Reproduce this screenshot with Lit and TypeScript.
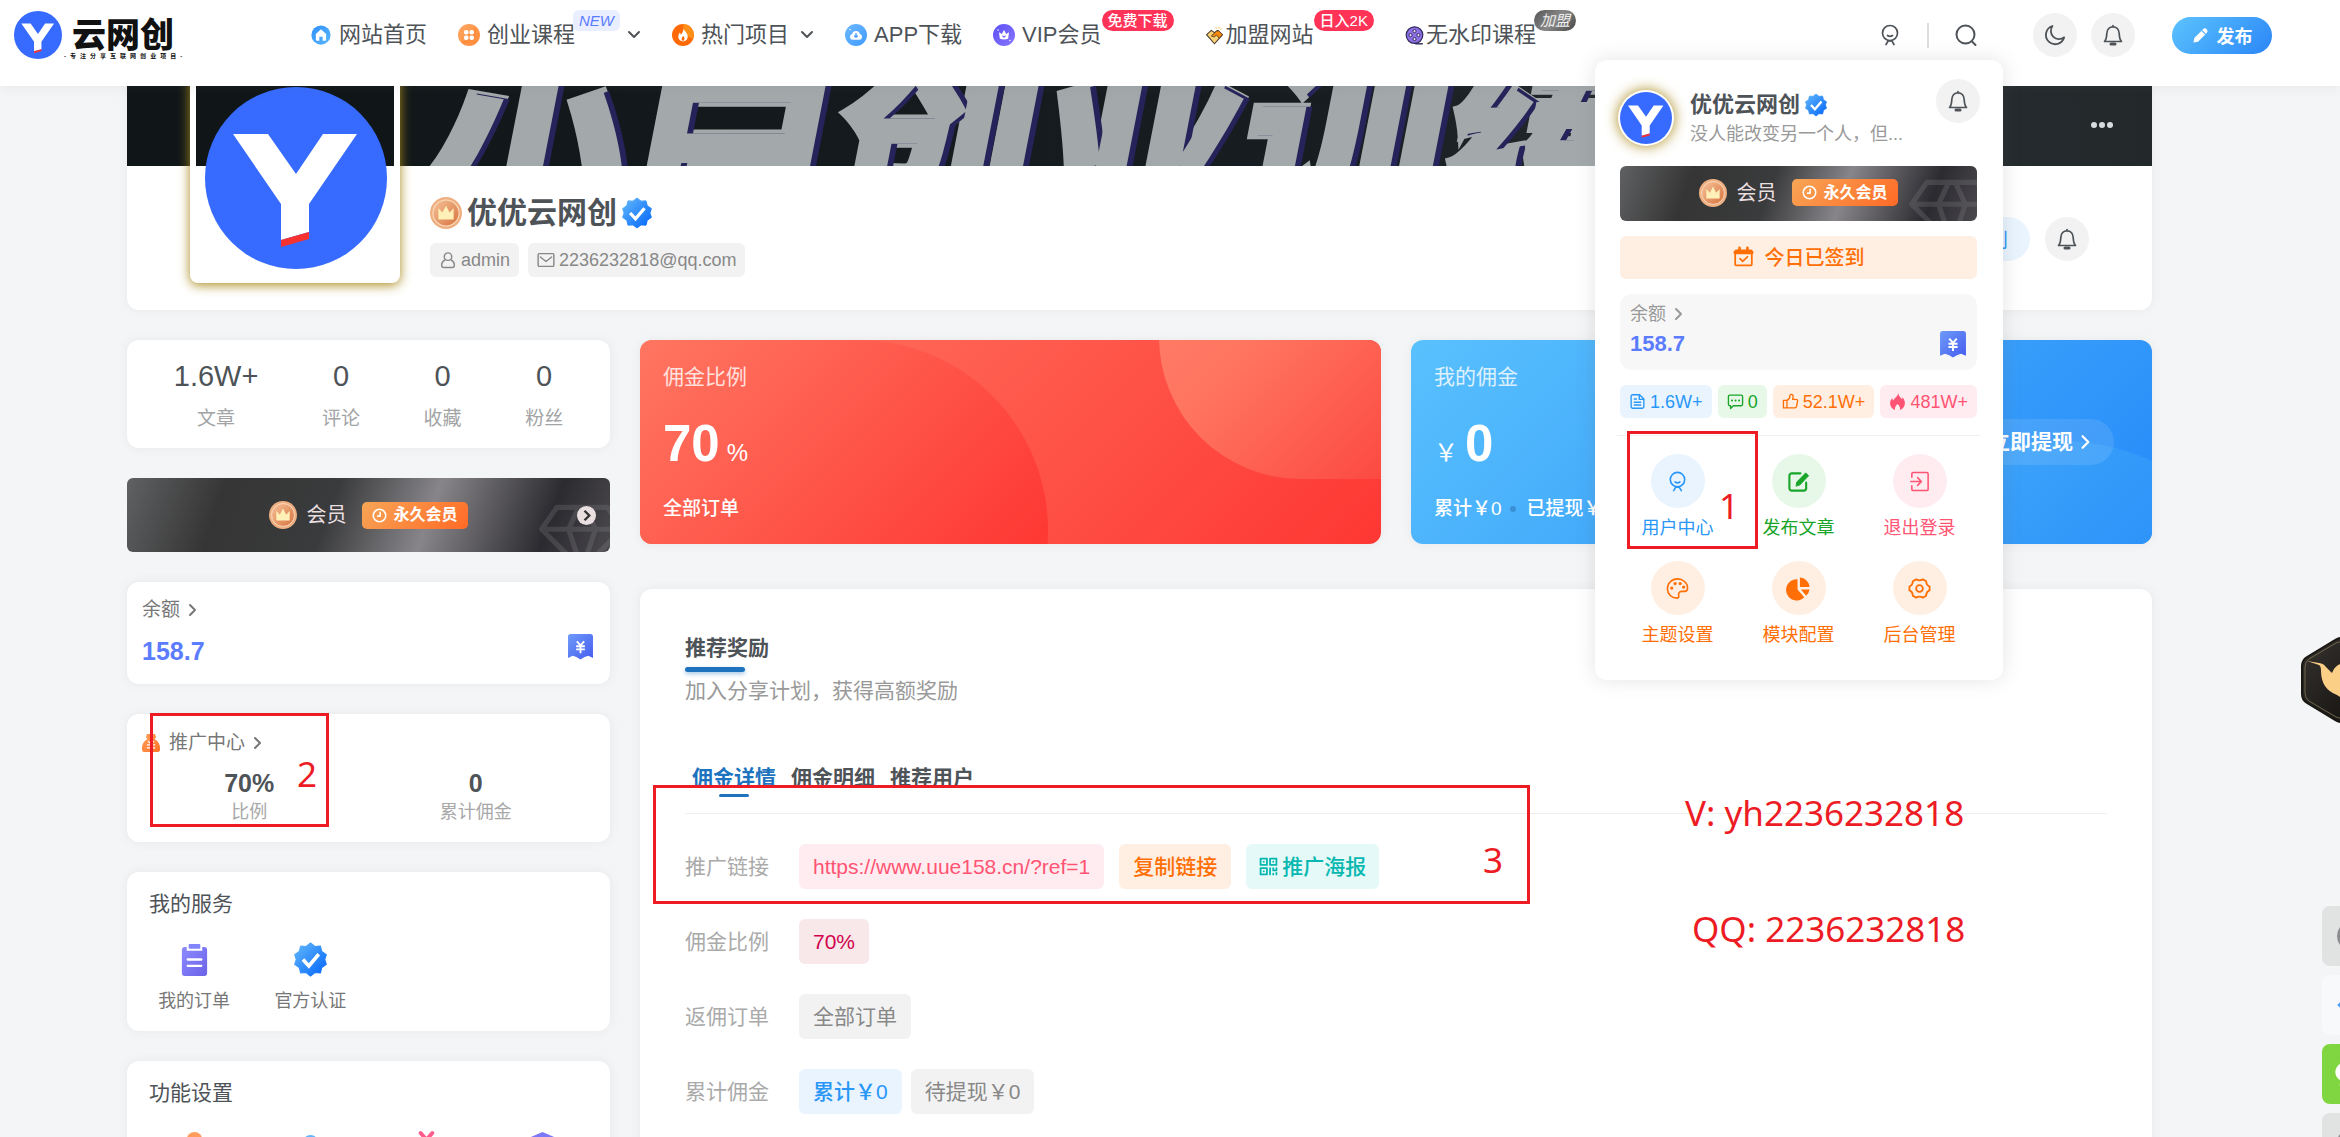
import { LitElement, html, css, svg, TemplateResult } from "lit";
import { customElement, property } from "lit/decorators.js";

type Icon = TemplateResult;

const line = (body: unknown, box = 24, width = 2): Icon => html`<svg viewBox="0 0 ${box} ${box}" fill="none" stroke="currentColor" stroke-width="${width}" stroke-linecap="round" stroke-linejoin="round" aria-hidden="true">${body}</svg>`;
const art = (body: unknown, box = "0 0 24 24"): Icon => html`<svg viewBox="${box}" aria-hidden="true">${body}</svg>`;

const grad = (id: string, from: string, to: string) => svg`<defs><linearGradient id="${id}" x1="0" y1="0" x2="1" y2="1"><stop offset="0" stop-color="${from}"/><stop offset="1" stop-color="${to}"/></linearGradient></defs>`;

const icons = {
  brand: () => art(svg`<circle r="91" fill="#376bff"/><path d="M-63-44H-28L0-4 27-44H61L13 26V54L-15 62V26Z" fill="#fff"/><path d="M-15 62 13 54V61L-15 69Z" fill="#f5322f"/>`, "-91 -91 182 182"),
  home: () => art(svg`${grad("hm", "#2e8ff8", "#5cb8ff")}<circle cx="12" cy="12" r="10.5" fill="url(#hm)"/><path d="M12 5.6 6.4 10.8V17a1.3 1.3 0 0 0 1.3 1.3h2.5v-4.4h3.6v4.4h2.5a1.3 1.3 0 0 0 1.3-1.3v-6.200Z" fill="#fff"/>`),
  course: () => art(svg`${grad("cs", "#ffa765", "#ff8a38")}<circle cx="12" cy="12" r="12" fill="url(#cs)"/><path d="M18 2A12 12 0 0 1 3 20Q16 16 18 2Z" fill="#ff7d2b" opacity=".35"/><g fill="#fff"><rect x="6.500" y="6.500" width="5" height="5" rx="2.200"/><rect x="12.500" y="6.500" width="5" height="5" rx="2.200"/><rect x="6.500" y="12.500" width="5" height="5" rx="2.200"/><rect x="12.500" y="12.500" width="5" height="5" rx="2.200"/></g>`),
  hot: () => art(svg`<circle cx="12" cy="12" r="12" fill="#ff6a06"/><path d="M12 0a12 12 0 0 1 11 16Q13 14 12 0Z" fill="#ffa01e" opacity=".7"/><path d="M12.500 4.500c.6 3 4.700 5 4.700 9.200a5.200 5.200 0 0 1-10.400.2c0-2 1-3.200 1.700-4.600.6.900.9 1.600 1 2.300 2-1.800 3-4.500 3-7.100Z" fill="#fff"/><path d="M12 18.800c-2.500-1.800-1.500-4 .3-5.600 1.600 1.800 2.200 3.800-.3 5.600Z" fill="#ff6a06"/>`),
  app: () => art(svg`${grad("ap", "#6cb8ff", "#3f9bff")}<circle cx="12" cy="12" r="12" fill="url(#ap)"/><path d="M8.500 17.300a3.200 3.200 0 0 1-.7-6.300 4.300 4.300 0 0 1 8.400 0 3.200 3.200 0 0 1-.7 6.300Z" fill="#fff"/><path d="M12 9.800v4.800m-2-2 2 2 2-2" stroke="#4ba2ff" stroke-width="1.500" fill="none"/><circle cx="5.500" cy="6" r=".8" fill="#fff"/>`),
  vip: () => art(svg`${grad("vp", "#5a50f5", "#8a77ff")}<circle cx="12" cy="12" r="12" fill="url(#vp)"/><path d="M6.500 9 9.600 10.800 12 6.500l2.400 4.300L17.500 9l-1 7.200q-4.500 1.500-9 0Z" fill="#fff"/><path d="m10.300 12.800 1.700 1.700 1.700-1.700" stroke="#6e60f9" stroke-width="1.200" fill="none"/><circle cx="5.500" cy="6.500" r=".8" fill="#fff"/><circle cx="18.500" cy="18" r=".8" fill="#fff"/>`),
  join: () => art(svg`<path d="M2 11 8 5.500l4 3 4-3L22 11 12 22.500Z" fill="#fbd277" stroke="#4a3a2a" stroke-width="1.300"/><path d="M8 12.500 14.500 6.500l3-.5L22 11l-4 4.500-3.500-4-3 2.500Z" fill="#f58a0b" stroke="#4a3a2a" stroke-width="1.100"/><path d="M14 1.500v2M18 1l-.5 2.500M21 3.500l-2 1.500" stroke="#f9b94b" stroke-width="1.200"/>`),
  reel: () => art(svg`<circle cx="12" cy="11.500" r="10.500" fill="#8f6fe8" stroke="#2d2a55" stroke-width="1.500"/><path d="M13 22.500h9.500" stroke="#2d2a55" stroke-width="1.800"/><g fill="#e7defc" stroke="#2d2a55" stroke-width="1.200"><circle cx="12" cy="6.500" r="2"/><circle cx="12" cy="16.500" r="2"/><circle cx="7" cy="11.500" r="2"/><circle cx="17" cy="11.500" r="2"/></g>`),
  chevronDown: () => line(svg`<path d="m2 4 5 5 5-5"/>`, 14, 2),
  chevronRight: () => line(svg`<path d="m4 2 5 5-5 5"/>`, 14, 2),
  person: () => line(svg`<circle cx="12" cy="10" r="7.500"/><path d="M9.500 12.500q2.500 1.800 5 0M8 21.500l2.200-3.600h3.600l2.200 3.600"/>`, 24, 1.700),
  search: () => line(svg`<circle cx="11.500" cy="11.500" r="9"/><path d="m18.500 19 3 3"/>`, 24, 2),
  moon: () => line(svg`<path d="M9.500 3a9.300 9.300 0 1 0 11.700 11.300A8.200 8.200 0 0 1 9.500 3Z"/>`, 24, 1.800),
  bell: () => line(svg`<path d="M12 2.500v1.200M3.500 18.500h17c-2-2-2-4-2.300-8C18 6.500 15.500 3.800 12 3.800S6 6.500 5.800 10.500c-.3 4-.3 6-2.300 8Z"/><path d="M10 21h4" stroke-width="3"/>`, 24, 1.700),
  pencil: () => art(svg`<path d="M2 22l1.300-6.500L15.600 3.200a3.600 3.600 0 0 1 5.200 5.200L8.500 20.700Z" fill="currentColor"/><path d="m14 5 5 5" stroke="#44a5fa" stroke-width="1.500"/>`),
  verified: () => art(svg`${grad("vf", "#63b9fb", "#0264fb")}<path d="M12 0l3.200 2.500 4-.2 1 3.900L23.500 8.500 22.300 12l1.200 3.500-3.300 2.300-1 3.900-4-.2L12 24l-3.200-2.500-4 .2-1-3.900L.5 15.500 1.700 12 .5 8.500l3.300-2.300 1-3.900 4 .2Z" fill="url(#vf)" stroke="url(#vf)" stroke-width=".8" stroke-linejoin="round"/><path d="m6.500 12 4.300 4.700L18 8.200" fill="none" stroke="#fff" stroke-width="2.600"/>`),
  medal: () => art(svg`${grad("md", "#f6c49a", "#d8713e")}<circle cx="12" cy="12" r="12" fill="#eeb082"/><circle cx="12" cy="12" r="9.800" fill="url(#md)" stroke="#fbdcbd" stroke-width=".8"/><path d="m6.300 8.500 3 3.200L12 6.500l2.700 5.200 3-3.200v8.300H6.300Z" fill="#fff0b8"/>`),
  user: () => line(svg`<circle cx="12" cy="7.500" r="5"/><path d="M8 12c-3 1.500-4.500 4-4.500 7 0 2 1 3 3 3h11c2 0 3-1 3-3 0-3-1.500-5.500-4.500-7"/>`, 24, 1.900),
  mail: () => line(svg`<rect x="1.500" y="3.500" width="21" height="17" rx="1.500"/><path d="m4.500 8 7.500 6 7.500-6"/>`, 24, 1.900),
  clock: () => line(svg`<circle cx="12" cy="12" r="10"/><path d="M13 7v6H9"/>`, 24, 2.500),
  arrowDisc: () => art(svg`<circle cx="12" cy="12" r="12" fill="#eadfe0"/><path d="m9.500 6 6 6-6 6" fill="none" stroke="#333" stroke-width="3"/>`),
  diamond: () => line(svg`<path d="M20 4h60l18 26-48 48L2 30ZM2 30h96M34 30 50 78 66 30M34 30 46 4M66 30 54 4"/>`, 100, 6),
  calendar: () => line(svg`<rect x="2.500" y="5" width="19" height="17" rx="1"/><path d="M2.500 7.500h19" stroke-width="4"/><path d="M7.500 2v3M16.500 2v3" stroke-width="3"/><path d="m8 14.500 3 3 5.500-5"/>`, 24, 2),
  coupon: () => art(svg`${grad("cp", "#6e9bf8", "#465cf0")}<path d="M2.500 0h19A2.500 2.500 0 0 1 24 2.500V23l-4.500-2-3.500 1.200L12 24.500l-4-2.300L4.500 21 0 23V2.500A2.500 2.500 0 0 1 2.500 0Z" fill="url(#cp)"/><path d="m8.500 7 3.500 4 3.500-4M12 11v7.500M7.800 11.800h8.400M7.800 14.800h8.400" fill="none" stroke="#fff" stroke-width="1.800"/>`, "0 0 24 25"),
  doc: () => line(svg`<path d="M5 2.500h10l6 6V19a2.500 2.500 0 0 1-2.500 2.500h-13A2.500 2.500 0 0 1 3 19V4.500a2 2 0 0 1 2-2ZM14.500 3v6H21M7.500 8.500h3M7.500 13h9M7.500 17h9"/>`, 24, 1.900),
  chat: () => line(svg`<path d="M4 3h16a2 2 0 0 1 2 2v11a2 2 0 0 1-2 2H9l-4 4v-4H4a2 2 0 0 1-2-2V5a2 2 0 0 1 2-2Z"/><path d="M7 10.500h.1M12 10.500h.1M17 10.500h.1" stroke-width="2.800"/>`, 24, 1.900),
  thumb: () => line(svg`<path d="M7 10.500V21H2V10.500Zm0 0c3-1.500 4-4 4-6 0-1.500 1-2.500 2.300-2.500C15 2 16 3.500 15.500 6L15 9h5a2 2 0 0 1 2 2.500L20.500 19a2.500 2.500 0 0 1-2.500 2H7"/>`, 24, 1.900),
  flame: () => art(svg`<path d="M13 0c.5 4.500 3.200 6 5 8.500.8-.6 1.200-1.500 1.300-2.500 2 2.700 3.200 5.500 3.200 8.500 0 4.500-3 8-7 9.500.8-3.500-.8-6-3.500-8.500-2.500 2.300-4.200 5-3.500 8.500C4.500 22.500 1.500 19 1.500 14.500c0-3 1.500-5.500 3-7 .3 1.500.8 2.500 1.700 3C8 6.500 12.500 5 13 0Z" fill="currentColor"/>`),
  edit: () => line(svg`<path d="M14 3.500H5A2.500 2.500 0 0 0 2.500 6v13A2.500 2.500 0 0 0 5 21.500h12.500A2.500 2.500 0 0 0 20 19v-6"/><path d="m9.500 16.500.8-4L19.500 3l3 3-9 9.500Z" fill="currentColor" stroke-width="1"/>`, 24, 2.200),
  exit: () => line(svg`<path d="M4 7.500V4a1.500 1.500 0 0 1 1.500-1.500h14A1.500 1.500 0 0 1 21 4v16a1.500 1.500 0 0 1-1.500 1.500h-14A1.500 1.500 0 0 1 4 20v-3.500M3 12h11m-4-4 4 4-4 4"/>`, 24, 1.600),
  palette: () => line(svg`<path d="M12 2C6 2 1.500 6.500 1.500 12.200 1.500 18 6 22 11 22c1.800 0 2.700-1 2.300-2.500-.6-2.500.4-4.500 3.200-4.500h2.700c2 0 3.300-1 3.300-3.500C22.500 6 17.500 2 12 2Z"/><g fill="currentColor" stroke="none"><circle cx="6" cy="11.500" r="1.700"/><circle cx="9.500" cy="6.800" r="1.700"/><circle cx="14.800" cy="6.800" r="1.700"/><circle cx="18.400" cy="10.500" r="1.700"/></g>`, 24, 1.700),
  pie: () => art(svg`<path d="M11 2.500V13l7 8A11 11 0 1 1 11 2.500ZM13.500.5A10.500 10.500 0 0 1 23.500 10.500h-10ZM14.500 13h9a10 10 0 0 1-3.500 6.500Z" fill="currentColor"/>`),
  gear: () => line(svg`<path d="M8.500 2.500q3.500 2 7 0l3.500 2q0 4 3.500 5.500v4q-3.500 1.500-3.500 5.500l-3.500 2q-3.500-2-7 0l-3.500-2q0-4-3.500-5.500v-4Q5 8.500 5 4.500Z"/><circle cx="12" cy="12" r="3.500"/>`, 24, 1.900),
  bag: () => art(svg`${grad("bg", "#ffa05a", "#ff7327")}<path d="M6.500 0h11l1.200 4.500-2.200 2.200C21 9 24 13.500 24 18.500V21a3 3 0 0 1-3 3H3a3 3 0 0 1-3-3v-2.500C0 13.500 3 9 7.500 6.700L5.300 4.500Z" fill="url(#bg)"/><path d="m8 9.500 4 4 4-4M6.500 14.500h11M6.500 18.500h11" fill="none" stroke="#fff" stroke-width="1.800"/>`),
  orders: () => art(svg`${grad("od", "#8d8bff", "#6a62e8")}<path d="M5 4h2v4h16V4h2a3 3 0 0 1 3 3v24a3 3 0 0 1-3 3H5a3 3 0 0 1-3-3V7a3 3 0 0 1 3-3Z" fill="url(#od)"/><rect x="9" y="1" width="12" height="5" rx="1" fill="#8285fb"/><path d="M8 17h14M8 23.500h14" stroke="#fff" stroke-width="2.400" stroke-linecap="round"/>`, "0 0 30 34"),
  profile: () => art(svg`<circle cx="15" cy="8" r="8" fill="#ff9c5c"/><path d="M1 32c0-10 5-14 14-14s14 4 14 14Z" fill="#ff7d38"/>`, "0 0 30 34"),
  locked: () => art(svg`<circle cx="15" cy="11" r="8" fill="#62b6ff"/><rect x="3" y="13" width="24" height="20" rx="3" fill="#3b93fa"/>`, "0 0 30 34"),
  ribbon: () => art(svg`<path d="m9 1 6 7 6-7" fill="none" stroke="#ff5c8d" stroke-width="4" stroke-linecap="round"/><rect x="3" y="9" width="24" height="23" rx="3" fill="#ff5c8d"/>`, "0 0 30 34"),
  shield: () => art(svg`<path d="M15 0 29 6v13c0 7-6 12-14 15C7 31 1 26 1 19V6Z" fill="#7b79f7"/>`, "0 0 30 34"),
  qr: () => line(svg`<rect x="2" y="2" width="8" height="8"/><rect x="14" y="2" width="8" height="8"/><rect x="2" y="14" width="8" height="8"/><path d="M6 6h.1M18 6h.1M6 18h.1M14 14v8M18 14v3h4v-3M22 20v2M18 21v1"/>`, 24, 2.300),
  dots: () => art(svg`<g fill="#d9dcde"><circle cx="3" cy="3" r="3"/><circle cx="11" cy="3" r="3"/><circle cx="19" cy="3" r="3"/></g>`, "0 0 22 6"),
  bird: () => art(svg`${grad("bd", "#35322f", "#100e0c")}<path d="M34 3q6-4 12 0l28 17q5 3 5 9v28q0 6-5 9L46 83q-6 4-12 0L6 66q-5-3-5-9V29q0-6 5-9Z" fill="url(#bd)" stroke="#1a1713" stroke-width="2"/><path d="M35 6q5-3 10 0l27 16q4 3 4 8v26q0 5-4 8L45 80q-5 3-10 0L8 64q-4-3-4-8V30q0-5 4-8Z" fill="none" stroke="#6d6549" stroke-width="1"/><path d="M6 24 18 26q5 1 6 3l7 7Q34 28 42 26l20 3-10 8q0 18-8 27-3-3-8-6-16-6-16-24 0-5-2-6Z" fill="#fbcf86"/>`, "0 0 80 86"),
};

const NAV: { label: string; icon: keyof typeof icons; href: string; small?: boolean; more?: boolean; tag?: string; tone?: string }[] = [
  { label: "网站首页", icon: "home", href: "#home" },
  { label: "创业课程", icon: "course", href: "#course", tag: "NEW", tone: "soft", more: true },
  { label: "热门项目", icon: "hot", href: "#hot", more: true },
  { label: "APP下载", icon: "app", href: "#app" },
  { label: "VIP会员", icon: "vip", href: "#vip", tag: "免费下载", tone: "red" },
  { label: "加盟网站", icon: "join", href: "#join", small: true, tag: "日入2K", tone: "red" },
  { label: "无水印课程", icon: "reel", href: "#clean", small: true, tag: "加盟", tone: "dark" },
];

const shared = css`
  * { box-sizing: border-box; }
  svg { display: block; flex: none; overflow: visible; }
  a { color: inherit; text-decoration: none; }
  button { font: inherit; color: inherit; border: 0; padding: 0; margin: 0; background: none; cursor: pointer; }
  h1, h2, p, ul, dl, dd, dt { margin: 0; padding: 0; font-weight: inherit; font-size: inherit; list-style: none; }
  .round { width: 44px; height: 44px; flex: none; display: grid; place-items: center; border-radius: 50%; background: #f2f2f2; color: #4e5358; }
  .round svg { width: 24px; height: 24px; }
  .c-blue { color: #2997f7; background: #e9f4ff; }
  .c-green { color: #18a52a; background: #e7f7e8; }
  .c-orange { color: #ff6f06; background: #ffefe3; }
  .c-pink { color: #ff5473; background: #ffecf0; }
  .c-teal { color: #08b8b0; background: #e4f9f8; }
  .c-red { color: #d1034a; background: #f8e8ea; }
  .c-gray { color: #888; background: #f2f2f2; }
`;

@customElement("vip-banner")
export class VipBanner extends LitElement {
  @property({ type: Boolean }) compact = false;
  static styles = [shared, css`
    :host { display: block; }
    .banner { position: relative; overflow: hidden; display: flex; align-items: center; justify-content: center; height: 74px; border-radius: 6px; color: #eadfe0; font-size: 20px; line-height: 26px;
      background: linear-gradient(110deg, #606163 0%, #353535 20%, #3a3b3c 42%, #87858a 62%, #2c2b30 86%, #4b494e 100%); }
    .compact { height: 55px; padding-bottom: 2px; }
    .medal { width: 28px; height: 28px; margin-right: 9px; }
    .tag { display: flex; align-items: center; gap: 6px; height: 27px; margin-left: 16px; padding: 0 10px; border-radius: 5px; color: #fff; font-size: 16px; font-weight: 700; background: linear-gradient(135deg, #f7a556, #ff6a26); }
    .tag svg { width: 15px; height: 15px; }
    .gem { position: absolute; right: -14px; bottom: -36px; width: 84px; height: 84px; color: #88868c; opacity: 0.25; }
    .gem svg { width: 84px; height: 84px; }
    .compact .gem { bottom: -42px; right: -17px; }
    .go { position: absolute; right: 14px; top: 28px; width: 19px; height: 19px; }
  `];
  render() {
    return html`<a href="#vip" class="banner ${this.compact ? "compact" : ""}">
      <span class="gem">${icons.diamond()}</span>
      <span class="medal">${icons.medal()}</span>会员
      <span class="tag">${icons.clock()}永久会员</span>
      ${this.compact ? "" : html`<span class="go">${icons.arrowDisc()}</span>`}
    </a>`;
  }
}

@customElement("site-header")
export class SiteHeader extends LitElement {
  static styles = [shared, css`
    :host { display: block; position: relative; z-index: 5; }
    .bar { display: flex; height: 86px; padding: 0 68px 16px 14px; align-items: center; background: #fff; box-shadow: 0 0 12px rgba(116, 116, 116, 0.12); color: #4e5358; }
    .logo { display: flex; align-items: center; width: 296px; flex: none; gap: 2px; color: #111; }
    .logo svg { width: 48px; height: 48px; }
    .words { display: flex; flex-direction: column; padding-top: 4px; }
    .title { padding-left: 8px; font-family: "Noto Sans CJK SC", sans-serif; font-weight: 900; font-size: 34px; line-height: 38px; }
    .motto { display: flex; gap: 4px; font-size: 6px; line-height: 8px; font-weight: 700; }
    nav { display: flex; gap: 31px; }
    .item { display: flex; align-items: center; height: 50px; font-size: 22px; line-height: 30px; white-space: nowrap; }
    .item > svg:first-child { width: 22px; height: 22px; margin-right: 7px; }
    .item.small > svg:first-child { width: 19px; height: 19px; margin-right: 2px; }
    .more { width: 14px; height: 14px; margin-left: 11px; }
    .tag { align-self: flex-start; height: 21px; padding: 0 6px; border-radius: 11px; font-size: 15px; line-height: 21px; }
    .tag.soft { margin: 0 -4px 0 -2px; border-radius: 6px; font-style: italic; color: #5c7cff; background: #e9efff; }
    .tag.red { color: #fff; background: #ff3358; font-weight: 500; }
    .tag.dark { margin-left: -2px; font-style: italic; color: #eee; background: linear-gradient(135deg, #555, #888 50%, #444); }
    .tools { display: flex; align-items: center; margin-left: auto; }
    .plain { width: 24px; height: 24px; }
    .rule { width: 2px; height: 25px; margin: 0 25px; background: #ddd; }
    .moon { margin: 0 14px 0 55px; }
    .publish { display: flex; align-items: center; justify-content: center; gap: 8px; width: 100px; height: 37px; margin-left: 37px; border-radius: 19px; color: #fff; font-size: 18px; font-weight: 700; background: linear-gradient(135deg, #5cc3fd, #2a86f7); }
    .publish svg { width: 17px; height: 17px; }
  `];
  render() {
    return html`<header class="bar">
      <a class="logo" href="#home">${icons.brand()}<span class="words"><span class="title">云网创</span><span class="motto">${[..."-专注分享互联网创业项目-"].map((c) => html`<span>${c}</span>`)}</span></span></a>
      <nav>${NAV.map((n) => html`<a class="item ${n.small ? "small" : ""}" href="${n.href}">${icons[n.icon]()}<span>${n.label}</span>${n.tag ? html`<span class="tag ${n.tone}">${n.tag}</span>` : ""}${n.more ? html`<span class="more">${icons.chevronDown()}</span>` : ""}</a>`)}</nav>
      <div class="tools">
        <button class="plain" aria-label="账号">${icons.person()}</button>
        <span class="rule"></span>
        <button class="plain" aria-label="搜索">${icons.search()}</button>
        <button class="round moon" aria-label="夜间模式">${icons.moon()}</button>
        <button class="round" aria-label="消息">${icons.bell()}</button>
        <button class="publish">${icons.pencil()}发布</button>
      </div>
    </header>`;
  }
}

@customElement("user-menu")
export class UserMenu extends LitElement {
  static styles = [shared, css`
    :host { display: block; width: 408px; padding: 19px 26px 32px 25px; border-radius: 12px; background: #fff; box-shadow: 0 0 20px rgba(90, 90, 90, 0.16); }
    .head { display: flex; margin: 0 -3px 17px -2px; min-height: 70px; }
    .face { width: 56px; height: 56px; margin: 11px 16px 0 0; padding: 2px; flex: none; border-radius: 50%; background: #fff; box-shadow: 0 0 14px #a98a1c; }
    .who { flex: 1; min-width: 0; padding-top: 12px; }
    .name { display: flex; align-items: center; gap: 5px; color: #4e5358; font-weight: 700; font-size: 22px; line-height: 28px; }
    .name svg { width: 22px; height: 22px; }
    .sign { color: #999; font-size: 18px; line-height: 30px; white-space: nowrap; }
    .check { display: flex; align-items: center; justify-content: center; gap: 11px; width: 100%; height: 43px; margin: 15px 0; padding-bottom: 3px; border-radius: 6px; font-size: 20px; font-weight: 500; }
    .check svg { width: 21px; height: 21px; }
    .wallet { display: flex; align-items: flex-end; justify-content: space-between; height: 76px; padding: 8px 11px 12px 10px; border-radius: 12px; background: #f7f7f7; color: #999; font-size: 18px; line-height: 24px; }
    .wallet .cap { display: flex; align-items: center; gap: 6px; }
    .cap svg { width: 14px; height: 14px; }
    .sum { margin-top: 4px; color: #5c7cff; font-size: 22px; line-height: 28px; font-weight: 700; }
    .wallet > svg { width: 26px; height: 27px; }
    .chips { display: flex; justify-content: space-between; gap: 6px; margin: 15px 0 17px; }
    .chip { display: flex; flex: 1 0 auto; align-items: center; justify-content: center; gap: 4px; height: 33px; padding: 0 8px; border-radius: 6px; font-size: 18px; line-height: 24px; font-weight: 500; }
    .chip svg { width: 17px; height: 17px; }
    .grid { display: grid; grid-template-columns: repeat(3, 1fr); gap: 20px 0; margin: 0 -3px; padding-top: 18px; border-top: 1px solid #f0f0f0; }
    .tile { display: flex; flex-direction: column; align-items: center; gap: 7px; font-size: 18px; line-height: 26px; background: none; }
    .disc { width: 54px; height: 54px; display: grid; place-items: center; border-radius: 50%; }
    .disc svg { width: 23px; height: 23px; }
  `];
  render() {
    const chips = [["blue", icons.doc, "1.6W+"], ["green", icons.chat, "0"], ["orange", icons.thumb, "52.1W+"], ["pink", icons.flame, "481W+"]] as const;
    const tiles = [["blue", icons.person, "用户中心"], ["green", icons.edit, "发布文章"], ["pink", icons.exit, "退出登录"], ["orange", icons.palette, "主题设置"], ["orange", icons.pie, "模块配置"], ["orange", icons.gear, "后台管理"]] as const;
    return html`
      <div class="head">
        <div class="face">${icons.brand()}</div>
        <div class="who"><div class="name">优优云网创${icons.verified()}</div><p class="sign">没人能改变另一个人，但...</p></div>
        <button class="round" aria-label="消息">${icons.bell()}</button>
      </div>
      <vip-banner compact></vip-banner>
      <button class="check c-orange">${icons.calendar()}今日已签到</button>
      <a class="wallet" href="#wallet"><div><div class="cap">余额 ${icons.chevronRight()}</div><div class="sum">158.7</div></div>${icons.coupon()}</a>
      <div class="chips">${chips.map(([c, i, t]) => html`<span class="chip c-${c}">${i()}${t}</span>`)}</div>
      <div class="grid">${tiles.map(([c, i, t]) => html`<a class="tile c-${c}" href="#${c}"><span class="disc c-${c}">${i()}</span>${t}</a>`)}</div>`;
  }
}

@customElement("side-column")
export class SideColumn extends LitElement {
  static styles = [shared, css`
    :host { display: flex; flex-direction: column; gap: 30px; color: #4e5358; }
    .card { border-radius: 12px; background: #fff; box-shadow: 0 0 10px rgba(116, 116, 116, 0.1); }
    .stats { display: flex; justify-content: space-around; padding: 16px 15px; text-align: center; }
    .stats dd { font-size: 29px; line-height: 40px; }
    .stats dt { margin-top: 10px; color: #a2a4a6; font-size: 19px; line-height: 26px; }
    .stats div { display: flex; flex-direction: column-reverse; }
    .money { display: flex; justify-content: space-between; align-items: flex-end; padding: 15px 17px 18px 15px; }
    .cap { display: flex; align-items: center; gap: 6px; color: #777; font-size: 19px; line-height: 26px; }
    .cap svg { width: 14px; height: 14px; }
    .cap .bag, .cap .bag svg { width: 18px; height: 18px; }
    .cap .bag { margin-right: 3px; }
    .sum { margin-top: 13px; color: #5c7cff; font-size: 25px; line-height: 30px; font-weight: 700; }
    .money > svg { width: 25px; height: 26px; margin-bottom: 6px; }
    .promo { padding: 16px 15px 18px; }
    .pair { display: grid; grid-template-columns: 1fr 1fr; margin: 12px 6px 0 -6px; text-align: center; }
    .pair div { display: flex; flex-direction: column-reverse; gap: 2px; }
    .pair dd { font-size: 25px; line-height: 30px; font-weight: 700; }
    .pair dt { color: #a8a8a8; font-size: 18px; line-height: 24px; }
    .block { padding: 17px 9px 18px; }
    .block h2 { padding-left: 13px; font-size: 21px; line-height: 30px; }
    .tools { display: grid; grid-template-columns: repeat(4, 1fr); margin-top: 24px; }
    .tools a { display: flex; flex-direction: column; align-items: center; gap: 13px; color: #777; font-size: 18px; line-height: 24px; }
    .tools svg { width: 33px; height: 33px; }
  `];
  private block(title: string, items: readonly (readonly [() => Icon, string])[]) {
    return html`<section class="card block"><h2>${title}</h2><div class="tools">${items.map(([i, t]) => html`<a href="#${t}">${i()}${t}</a>`)}</div></section>`;
  }
  render() {
    const stats = [["1.6W+", "文章"], ["0", "评论"], ["0", "收藏"], ["0", "粉丝"]];
    return html`
      <dl class="card stats">${stats.map(([v, l]) => html`<div><dt>${l}</dt><dd>${v}</dd></div>`)}</dl>
      <vip-banner></vip-banner>
      <a class="card money" href="#wallet"><div><div class="cap">余额 ${icons.chevronRight()}</div><div class="sum">158.7</div></div>${icons.coupon()}</a>
      <section class="card promo">
        <a class="cap" href="#promo"><span class="bag">${icons.bag()}</span>推广中心 ${icons.chevronRight()}</a>
        <dl class="pair"><div><dt>比例</dt><dd>70%</dd></div><div><dt>累计佣金</dt><dd>0</dd></div></dl>
      </section>
      ${this.block("我的服务", [[icons.orders, "我的订单"], [icons.verified, "官方认证"]])}
      ${this.block("功能设置", [[icons.profile, ""], [icons.locked, ""], [icons.ribbon, ""], [icons.shield, ""]])}`;
  }
}

@customElement("commission-panel")
export class CommissionPanel extends LitElement {
  static styles = [shared, css`
    :host { display: flex; flex-direction: column; gap: 45px; min-width: 0; color: #4e5358; font-size: 21px; line-height: 30px; }
    .heroes { display: grid; grid-template-columns: 1fr 1fr; gap: 30px; }
    .hero { position: relative; overflow: hidden; height: 204px; padding: 22px 23px; border-radius: 12px; color: #fff; box-shadow: 0 0 10px rgba(116, 116, 116, 0.1); }
    .hero::before, .hero::after { content: ""; position: absolute; background: inherit; }
    .hero > * { position: relative; z-index: 1; }
    .red { background-image: linear-gradient(135deg, #ff7661, #fe3733); }
    .red::before { left: 0; top: 0; width: 408px; height: 380px; border-radius: 0 190px 190px 0; background-size: 408px 204px; background-repeat: no-repeat; }
    .red::after { right: 0; top: -50px; width: 222px; height: 189px; border-radius: 0 0 0 142px; background: linear-gradient(135deg, #ff7c66, #ff7560 35%, #fc4a42); }
    .blue { background-image: linear-gradient(135deg, #59c1fd, #258af9); }
    .blue::before { right: -129px; top: 101px; width: 442px; height: 442px; border-radius: 50%; background: linear-gradient(135deg, #46adfb, #2c92f9 50%); }
    .blue::after { display: none; }
    .cap { opacity: 0.8; }
    .big { display: flex; align-items: baseline; gap: 7px; height: 50px; margin: 26px 0 28px; font-size: 24px; line-height: 52px; }
    .big b { font-size: 51px; }
    .foot { display: flex; align-items: center; gap: 8px; font-size: 19px; line-height: 26px; font-weight: 500; }
    .foot i { width: 6px; height: 6px; margin: 0 3px 0 0; border-radius: 50%; background: #3b8fd4; }
    .hero .cash { position: absolute; right: 38px; top: 79px; display: flex; align-items: center; gap: 5px; height: 46px; padding: 0 20px; border-radius: 23px; font-weight: 700; background: rgba(255, 255, 255, 0.1); }
    .cash svg { width: 16px; height: 16px; }
    .panel { flex: 1; padding: 44px 45px 60px; border-radius: 12px; background: #fff; box-shadow: 0 0 10px rgba(116, 116, 116, 0.1); }
    .panel h2 { font-weight: 700; }
    .mark { width: 60px; height: 5px; margin: 4px 0; border-radius: 3px; background: #1e73be; box-shadow: 0 2px 4px rgba(30, 115, 190, 0.4); }
    .desc { color: #999; }
    .tabs { display: flex; gap: 15px; margin-top: 57px; padding: 0 7px 16px; border-bottom: 1px solid #eee; }
    .tabs button { display: flex; flex-direction: column; align-items: center; gap: 1px; font-weight: 700; line-height: 30px; height: 34px; }
    .tabs .on { color: #1e73be; }
    .on::after { content: ""; width: 30px; height: 3px; border-radius: 2px; background: #1e73be; }
    .rows { display: grid; gap: 30px; margin-top: 30px; }
    .row { display: flex; align-items: center; gap: 15px; color: #aaa; }
    .row dt { width: 99px; }
    .row dd { display: flex; gap: 15px; }
    .row .tight { gap: 9px; }
    .chip { display: flex; align-items: center; gap: 4px; height: 45px; padding: 0 14px; border-radius: 6px; font-weight: 500; white-space: nowrap; }
    .c-teal.chip { padding: 0 13px; }
    .c-gray.chip { font-weight: 400; }
    .chip svg { width: 19px; height: 19px; }
  `];
  render() {
    return html`
      <div class="heroes">
        <section class="hero red"><p class="cap">佣金比例</p><p class="big"><b>70</b>%</p><p class="foot">全部订单</p></section>
        <section class="hero blue"><p class="cap">我的佣金</p><p class="big">￥<b>0</b></p><p class="foot">累计￥0<i></i>已提现￥0</p><button class="cash">立即提现${icons.chevronRight()}</button></section>
      </div>
      <section class="panel">
        <h2>推荐奖励</h2><div class="mark"></div><p class="desc">加入分享计划，获得高额奖励</p>
        <div class="tabs" role="tablist"><button role="tab" aria-selected="true" class="on">佣金详情</button><button role="tab" aria-selected="false">佣金明细</button><button role="tab" aria-selected="false">推荐用户</button></div>
        <dl class="rows">
          <div class="row"><dt>推广链接</dt><dd><a class="chip c-pink" href="#ref">https://www.uue158.cn/?ref=1</a><button class="chip c-orange">复制链接</button><button class="chip c-teal">${icons.qr()}推广海报</button></dd></div>
          <div class="row"><dt>佣金比例</dt><dd><span class="chip c-red">70%</span></dd></div>
          <div class="row"><dt>返佣订单</dt><dd><span class="chip c-gray">全部订单</span></dd></div>
          <div class="row"><dt>累计佣金</dt><dd class="tight"><span class="chip c-blue">累计￥0</span><span class="chip c-gray">待提现￥0</span></dd></div>
        </dl>
      </section>`;
  }
}

@customElement("app-root")
export class AppRoot extends LitElement {
  static styles = [shared, css`
    :host { display: block; position: relative; height: 100vh; overflow: hidden; background: #f4f5f7; color: #4e5358; font-family: "Liberation Sans", "Noto Sans CJK SC", sans-serif; font-size: 21px; }
    user-menu { position: absolute; z-index: 6; top: 60px; right: 337px; }
    main { padding: 0 188px 0 127px; }
    .profile { border-radius: 0 0 12px 12px; background: #fff; box-shadow: 0 0 10px rgba(116, 116, 116, 0.1); }
    .cover { position: relative; height: 80px; overflow: hidden; background: linear-gradient(90deg, #101618, #171d20 60%, #282e31 80%, #23292b); }
    .slogan { position: absolute; left: 304px; top: -86px; transform: skewX(-11deg); font-family: "Noto Sans CJK SC", sans-serif; font-weight: 900; font-size: 204px; line-height: 260px; white-space: nowrap; color: #a3a8aa; text-shadow: 6px 0 0 #25235a; -webkit-text-stroke: 8px #a3a8aa; paint-order: stroke fill; }
    .dots { position: absolute; right: 39px; top: 33px; width: 22px; height: 12px; }
    .info { display: flex; align-items: flex-start; padding: 0 63px 27px; }
    .avatar { position: relative; flex: none; width: 210px; height: 210px; margin: -93px 30px 0 0; padding: 14px 14px 14px 15px; border-radius: 8px; background: linear-gradient(#101618, #101618) 6px 0 / 198px 93px no-repeat, #fff; box-shadow: 0 2px 12px #a98a1c; }
    .avatar svg { width: 182px; height: 182px; }
    .who { padding-top: 27px; }
    h1 { display: flex; align-items: center; gap: 5px; font-size: 30px; line-height: 40px; font-weight: 700; }
    h1 .medal { width: 32px; } h1 svg { width: 100%; } h1 .ok { width: 30px; }
    .pills { display: flex; gap: 9px; margin-top: 10px; }
    .pill { display: flex; align-items: center; gap: 4px; height: 34px; padding: 0 9px; border-radius: 6px; font-size: 18px; }
    .pill svg { width: 18px; height: 18px; }
    .acts { display: flex; gap: 15px; margin: 51px 0 0 auto; }
    .signed { height: 44px; padding: 0 22px; border-radius: 22px; font-size: 20px; }
    .cols { display: grid; grid-template-columns: 483px 1fr; gap: 30px; margin-top: 30px; }
    .note { position: absolute; z-index: 9; border: 3px solid #ed1c24; pointer-events: none; }
    .note-1 { left: 1627px; top: 431px; width: 131px; height: 118px; }
    .note-2 { left: 150px; top: 713px; width: 179px; height: 114px; }
    .note-3 { left: 653px; top: 785px; width: 877px; height: 119px; }
    .ink { position: absolute; z-index: 9; color: #ed1c24; font-family: "Noto Sans", "Open Sans", sans-serif; font-size: 35px; line-height: 40px; white-space: nowrap; }
    .ink-1 { left: 1719px; top: 486px; }
    .ink-2 { left: 297px; top: 754px; }
    .ink-3 { left: 1483px; top: 840px; }
    .ink-v { left: 1685px; top: 793px; }
    .ink-q { left: 1692px; top: 909px; }
    .float { position: absolute; z-index: 4; left: calc(100% - 39px); top: 637px; width: 80px; }
    .dock { position: absolute; z-index: 4; left: calc(100% - 18px); top: 906px; display: grid; gap: 9px; }
    .dock button { width: 60px; height: 60px; padding-left: 14px; border-radius: 8px; background: #e1e3e3; color: #8b8d8f; }
    .dock svg { width: 32px; height: 32px; }
    .dock .pale { background: #f8f9fb; color: #409eff; }
    .dock .green { padding-left: 12px; background: #80d640; color: #fff; }
  `];
  render() {
    const disc = line(svg`<circle cx="12" cy="12" r="10"/>`, 24, 2.500);
    const gem = art(svg`<path d="M1 12 12 1l11 11-11 11Z" fill="currentColor"/>`);
    const talk = art(svg`<path d="M12 2C6 2 1 5.800 1 10.500 1 13.200 2.600 15.600 5 17l-.8 3.500L8 18.600c1.300.3 2.600.4 4 .4 6 0 11-3.800 11-8.500S18 2 12 2Z" fill="currentColor"/>`);
    return html`
      <site-header></site-header>
      <user-menu></user-menu>
      <main>
        <section class="profile">
          <div class="cover"><span class="slogan">小白创业训练</span><button class="dots" aria-label="更多">${icons.dots()}</button></div>
          <div class="info">
            <div class="avatar">${icons.brand()}</div>
            <div class="who">
              <h1><span class="medal">${icons.medal()}</span>优优云网创<span class="ok">${icons.verified()}</span></h1>
              <div class="pills"><span class="pill c-gray">${icons.user()}admin</span><span class="pill c-gray">${icons.mail()}2236232818@qq.com</span></div>
            </div>
            <div class="acts"><button class="signed c-blue">已签到</button><button class="round" aria-label="消息">${icons.bell()}</button></div>
          </div>
        </section>
        <div class="cols"><side-column></side-column><commission-panel></commission-panel></div>
      </main>
      <span class="note note-1"></span><span class="note note-2"></span><span class="note note-3"></span>
      <span class="ink ink-1">1</span><span class="ink ink-2">2</span><span class="ink ink-3">3</span>
      <span class="ink ink-v">V: yh2236232818</span><span class="ink ink-q">QQ: 2236232818</span>
      <a class="float" href="#bird" aria-label="导航">${icons.bird()}</a>
      <div class="dock"><button aria-label="客服">${disc}</button><button class="pale" aria-label="会员">${gem}</button><button class="green" aria-label="微信">${talk}</button><button aria-label="返回顶部">${disc}</button></div>`;
  }
}
